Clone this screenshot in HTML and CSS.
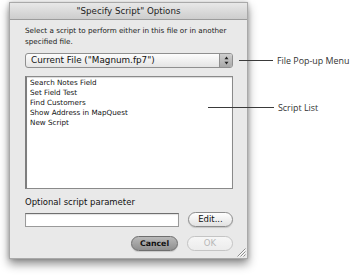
FILE: index.html
```html
<!DOCTYPE html>
<html lang="en">
<head>
    <meta charset="UTF-8">
    <title>Specify Script Options</title>
    <link rel="stylesheet" href="styles.css">
</head>
<body>
    <div class="dialog">
        <div class="titlebar">"Specify Script" Options</div>
        <div class="content">
            <p class="intro">Select a script to perform either in this file or in another specified file.</p>
            <div class="popup">
                <span class="popup-label">Current File ("Magnum.fp7")</span>
                <span class="stepper">
                    <svg width="5" height="9" viewBox="0 0 5 9">
                        <path d="M2.5 0.5 L4.5 3.3 L0.5 3.3 Z" fill="#222"/>
                        <path d="M2.5 8.5 L4.5 5.7 L0.5 5.7 Z" fill="#222"/>
                    </svg>
                </span>
            </div>
            <ul class="scripts">
                <li>Search Notes Field</li>
                <li>Set Field Test</li>
                <li>Find Customers</li>
                <li>Show Address in MapQuest</li>
                <li>New Script</li>
            </ul>
            <div class="param-label">Optional script parameter</div>
            <div class="param-row">
                <input class="param" type="text">
                <button class="btn">Edit...</button>
            </div>
            <div class="actions">
                <button class="btn cancel">Cancel</button>
                <button class="btn disabled">OK</button>
            </div>
        </div>
        <svg class="grip" width="10" height="10" viewBox="0 0 10 10">
            <path d="M9.5 1.5 L1.5 9.5 M9.5 4.5 L4.5 9.5 M9.5 7.5 L7.5 9.5" stroke="#8d8d8d" stroke-width="1"/>
            <path d="M9.5 2.5 L2.5 9.5 M9.5 5.5 L5.5 9.5" stroke="#fafafa" stroke-width="1"/>
        </svg>
    </div>

    <!-- callouts -->
    <div class="callout popup-callout">
        <span class="line"></span>
        <span class="text">File Pop-up Menu</span>
    </div>
    <div class="callout list-callout">
        <span class="line"></span>
        <span class="text">Script List</span>
    </div>
</body>
</html>
```
FILE: styles.css
```css
*{
    margin: 0;
    padding: 0;
    box-sizing: border-box;
    list-style: none;
}
html,body{
    width: 352px;
    height: 276px;
    background-color: #fff;
    overflow: hidden;
}
body{
    position: relative;
    font-family: "DejaVu Sans", "Liberation Sans", sans-serif;
    color: #111;
}
.dialog{
    position: relative;
    width: 239px;
    height: 257px;
    margin: 2px 0 0 9px;
    background-color: #e9e9e9;
    border: 1px solid #a9a9a9;
    box-shadow: 0 5px 9px rgba(0,0,0,.45), 0 0 4px rgba(0,0,0,.2);
    display: flex;
    flex-direction: column;
}
.titlebar{
    height: 17px;
    flex-shrink: 0;
    text-align: center;
    font-size: 8.7px;
    line-height: 16px;
    color: #222;
    background: linear-gradient(#e8e8e8, #cdcdcd);
    border-bottom: 1px solid #9c9c9c;
}
.content{
    flex: 1;
    display: flex;
    flex-direction: column;
    padding: 5px 14px 0 15px;
}
.intro{
    font-size: 7.2px;
    line-height: 11px;
    color: #1a1a1a;
}
.popup{
    display: flex;
    align-items: stretch;
    height: 15px;
    margin-top: 6px;
    border: 1px solid #8f8f8f;
    border-radius: 3px;
    background: linear-gradient(#fdfdfd, #e4e4e4);
    overflow: hidden;
}
.popup-label{
    flex: 1;
    font-size: 8.8px;
    line-height: 13px;
    padding-left: 5px;
    color: #111;
}
.stepper{
    width: 13px;
    display: flex;
    align-items: center;
    justify-content: center;
    background: linear-gradient(#cfcfcf, #a9a9a9);
    border-left: 1px solid #8f8f8f;
}
.scripts{
    height: 113px;
    margin-top: 8px;
    background-color: #fff;
    border: 1px solid #8a8a8a;
    border-left: 2px solid #7e7e7e;
    box-shadow: inset 0 1px 1px rgba(0,0,0,.15);
    padding: 0.5px 0 0 3px;
}
.scripts li{
    font-size: 7.2px;
    line-height: 10px;
    color: #111;
}
.param-label{
    margin-top: 8px;
    font-size: 8.5px;
    line-height: 11px;
    color: #111;
}
.param-row{
    display: flex;
    align-items: center;
    gap: 9px;
    margin-top: 4px;
    height: 15px;
}
.param{
    width: 154px;
    height: 14px;
    border: 1px solid #9a9a9a;
    border-top-color: #6f6f6f;
    background-color: #fff;
    box-shadow: inset 0 1px 1px rgba(0,0,0,.12);
}
.btn{
    flex: 1;
    height: 15px;
    font-family: "DejaVu Sans", "Liberation Sans", sans-serif;
    font-size: 8.5px;
    line-height: 13px;
    color: #111;
    border: 1px solid #8c8c8c;
    border-radius: 8px;
    background: linear-gradient(#fefefe, #e2e2e2);
    box-shadow: 0 1px 1px rgba(0,0,0,.15);
}
.actions{
    display: flex;
    justify-content: flex-end;
    gap: 9px;
    margin-top: 9px;
}
.actions .btn{
    flex: none;
    width: 47px;
}
.actions .cancel{
    background: linear-gradient(#b9b9b9, #8f8f8f);
    border-color: #6e6e6e;
    font-weight: bold;
    font-size: 7.8px;
}
.actions .disabled{
    width: 46px;
    color: #b8b8b8;
    border-color: #c4c4c4;
    background: linear-gradient(#f6f6f6, #ececec);
    box-shadow: none;
}
.grip{
    position: absolute;
    right: 1px;
    bottom: 1px;
}
.callout{
    position: absolute;
    display: flex;
    align-items: center;
    height: 12px;
}
.callout .line{
    height: 1px;
    background-color: #3a3a3a;
}
.callout .text{
    margin-left: 4px;
    font-family: "Open Sans", "Liberation Sans", sans-serif;
    font-size: 8.9px;
    color: #333;
    white-space: nowrap;
}
.popup-callout{
    left: 239px;
    top: 54px;
}
.popup-callout .line{
    width: 34px;
}
.list-callout{
    left: 208px;
    top: 101px;
}
.list-callout .line{
    width: 66px;
}
```
